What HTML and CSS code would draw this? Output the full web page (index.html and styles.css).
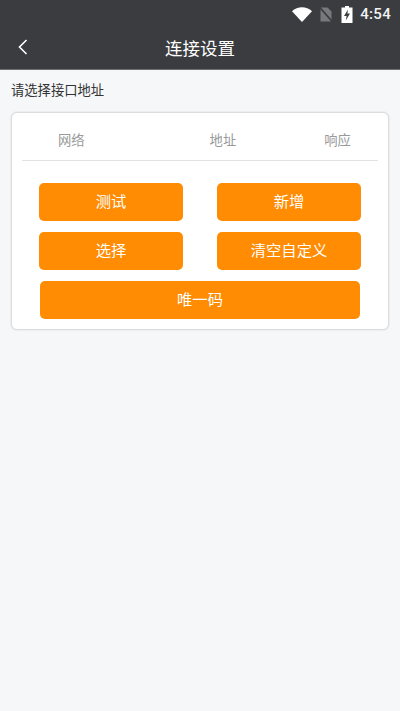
FILE: index.html
```html
<!DOCTYPE html>
<html lang="zh">
<head>
<meta charset="utf-8">
<title>连接设置</title>
<link rel="stylesheet" href="styles.css">
</head>
<body>
<div class="header">
  <div class="status">
    <svg class="wifi" viewBox="0 0 20 15" width="20" height="15"><path d="M0 4.2C5.5-1 14.5-1 20 4.2L10 15Z" fill="#fff"/></svg>
    <svg class="nosim" viewBox="0 0 14 16" width="14" height="16"><path d="M1.5 0.5H8.5L12.5 4.5V14.5H1.5Z" fill="#77797c"/><path d="M0.5 0L13.5 15" stroke="#3a3c40" stroke-width="1.6"/></svg>
    <svg class="battery" viewBox="0 0 12 17" width="12" height="17"><path d="M4 0H8V1.5H11.5V17H0.5V1.5H4Z" fill="#fff"/><path d="M7 3.5L3 10H5.6L4.8 14.5L9 7.6H6.4Z" fill="#3a3c40"/></svg>
    <span class="time">4:54</span>
  </div>
  <div class="nav">
    <svg class="back" viewBox="0 0 10 16" width="10" height="16"><path d="M8.5 1L1.5 8L8.5 15" fill="none" stroke="#fff" stroke-width="1.6"/></svg>
    <span class="title">连接设置</span>
  </div>
</div>
<main class="content">
  <p class="label">请选择接口地址</p>
  <section class="card">
    <div class="columns">
      <span class="col-net">网络</span>
      <span class="col-addr">地址</span>
      <span class="col-resp">响应</span>
    </div>
    <div class="actions">
      <div class="row">
        <button class="btn">测试</button>
        <button class="btn">新增</button>
      </div>
      <div class="row">
        <button class="btn">选择</button>
        <button class="btn">清空自定义</button>
      </div>
      <button class="btn wide">唯一码</button>
    </div>
  </section>
</main>
</body>
</html>
```
FILE: styles.css
```css
* { box-sizing: border-box; }
html, body { margin: 0; height: 100%; }
body {
  width: 400px;
  height: 711px;
  overflow: hidden;
  background: #f6f7f9;
  font-family: "Noto Sans CJK SC", Roboto, sans-serif;
}
.header {
  height: 70px;
  background: #3a3c40;
  border-bottom: 1px solid #6e7073;
}
.status {
  height: 28px;
  padding-top: 1px;
  display: flex;
  align-items: center;
  justify-content: flex-end;
  padding-right: 9px;
}
.wifi { margin-right: 7px; }
.nosim { margin-right: 8px; }
.battery { margin-right: 7px; margin-top: -1px; }
.time {
  font-family: Roboto, sans-serif;
  font-size: 15px;
  font-weight: 500;
  color: #f2f2f2;
  letter-spacing: 0.3px;
  margin-top: -1px;
}
.nav {
  height: 41px;
  position: relative;
  display: flex;
  align-items: center;
  justify-content: center;
}
.back { position: absolute; left: 18px; top: 11px; }
.title { font-size: 17.5px; color: #fff; line-height: 41px; margin-top: -3px; }
.content { padding: 0 11px; }
.label {
  margin: 0;
  height: 42px;
  padding-top: 10px;
  font-size: 13.3px;
  line-height: 20px;
  color: #333;
}
.card {
  width: 378px;
  height: 218px;
  background: #fff;
  border: 1px solid #dcdddf;
  border-radius: 6px;
  box-shadow: 0 0 2px rgba(0, 0, 0, 0.14);
  padding: 0 10px;
}
.columns {
  height: 48px;
  border-bottom: 1px solid #e2e2e2;
  font-size: 13.3px;
  line-height: 54px;
  color: #999;
  display: flex;
}
.col-net { margin-left: 36px; }
.col-addr { margin-left: 125px; }
.col-resp { margin-left: 88px; }
.actions {
  padding-top: 22px;
  display: flex;
  flex-direction: column;
  gap: 11px;
}
.row {
  display: flex;
  justify-content: space-between;
  padding: 0 17px;
}
.btn {
  width: 144px;
  height: 38px;
  padding: 0 0 4px;
  border: 0;
  border-radius: 5px;
  background: #ff8c03;
  color: #fff;
  font-family: inherit;
  font-size: 15.3px;
}
.wide { width: 320px; margin-left: 18px; }
```
